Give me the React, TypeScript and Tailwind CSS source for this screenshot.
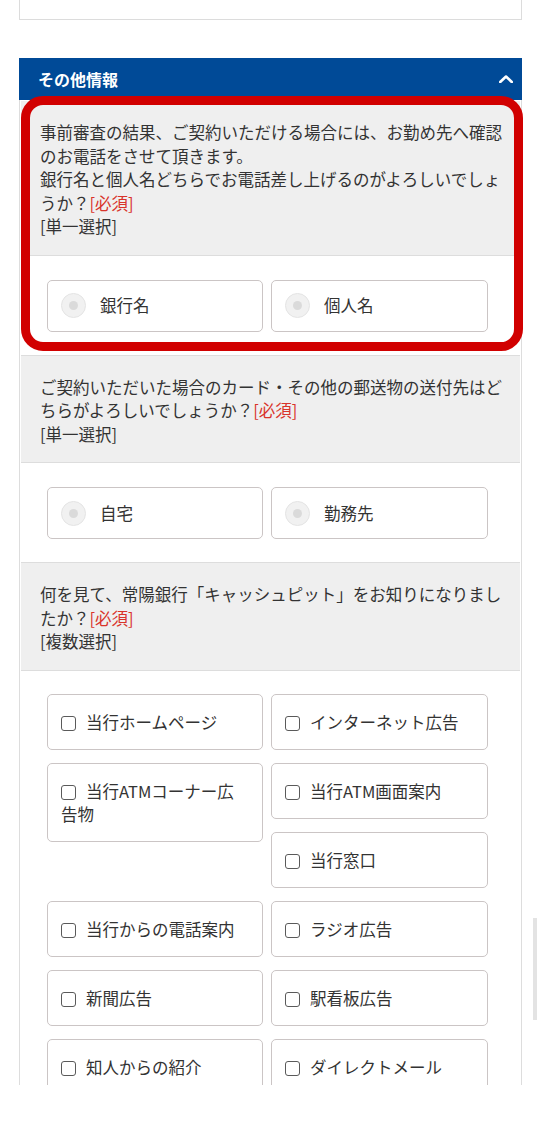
import React from 'react';

type Opt = { label: React.ReactNode; tall?: boolean };

const FONT = "font-['Noto_Sans_CJK_JP','Noto_Sans',sans-serif]";

function Required() {
  return <span className="text-[#d9342b]">[必須]</span>;
}

function Question({ children, first }: { children: React.ReactNode; first?: boolean }) {
  return (
    <div className={`${first ? '' : 'border-t border-[#dddddd]'} bg-white`}>
      <div className="bg-[#efefef] border-b border-[#dddddd] pl-[19px] pr-[8px] pt-5 pb-4 text-[16.5px] leading-[23.5px] text-[#333333]">
        {children}
      </div>
    </div>
  );
}

function RadioRow({ options }: { options: string[] }) {
  return (
    <div className="pl-[26px] pt-6 pb-[23px] grid grid-cols-[216px_217px] gap-x-2">
      {options.map((o) => (
        <div key={o} className="h-[52px] border border-[#cbc5c5] rounded-[5px] flex items-center pl-[13px]">
          <div className="w-[25px] h-[25px] rounded-full bg-[#f1f1f1] border border-[#e4e4e4] flex items-center justify-center">
            <div className="w-[9px] h-[9px] rounded-full bg-[#dadada]" />
          </div>
          <span className="ml-[14px] text-[16.5px] text-[#333333]">{o}</span>
        </div>
      ))}
    </div>
  );
}

function CheckItem({ opt }: { opt: Opt }) {
  return (
    <div
      className={`self-start border border-[#cbc5c5] rounded-[5px] pl-[13px] pr-[12px] pt-[16px] pb-[15px] text-[16.5px] leading-[23px] text-[#333333] ${
        opt.tall ? 'row-span-2' : ''
      }`}
    >
      <span className="inline-block w-[15px] h-[15px] border-[1.5px] border-[#5a5a5a] rounded-[3px] align-middle mr-[10px] relative -top-px" />
      {opt.label}
    </div>
  );
}

const checks: Opt[] = [
  { label: '当行ホームページ' },
  { label: 'インターネット広告' },
  {
    label: (
      <>
        当行ATMコーナー広
        <br />
        告物
      </>
    ),
    tall: true,
  },
  { label: '当行ATM画面案内' },
  { label: '当行窓口' },
  { label: '当行からの電話案内' },
  { label: 'ラジオ広告' },
  { label: '新聞広告' },
  { label: '駅看板広告' },
  { label: '知人からの紹介' },
  { label: 'ダイレクトメール' },
];

export default function App() {
  return (
    <div className={`relative min-h-[1125px] bg-white ${FONT}`}>
      <div className="h-[1085px] overflow-hidden">
        <div className="ml-[19px] w-[503px]">
          <div className="h-[20px] border-x border-b border-[#dcdcdc] bg-white" />

          <div className="relative mt-[38px]">
            <div className="h-[42px] bg-[#004a97] flex items-center justify-between pl-[19px] pr-[9px]">
              <span className="text-white font-bold text-[16px]">その他情報</span>
              <svg width="14" height="8" viewBox="0 0 14 8" fill="none">
                <path d="M1.2 7 L7 1.5 L12.8 7" stroke="white" strokeWidth="2.6" strokeLinecap="round" strokeLinejoin="round" />
              </svg>
            </div>

            <div className="border-x border-[#dddddd] px-px pt-px">
              <Question first>
                事前審査の結果、ご契約いただける場合には、お勤め先へ確認
                <br />
                のお電話をさせて頂きます。
                <br />
                銀行名と個人名どちらでお電話差し上げるのがよろしいでしょ
                <br />
                うか？<Required />
                <br />
                [単一選択]
              </Question>
              <RadioRow options={['銀行名', '個人名']} />

              <Question>
                ご契約いただいた場合のカード・その他の郵送物の送付先はど
                <br />
                ちらがよろしいでしょうか？<Required />
                <br />
                [単一選択]
              </Question>
              <RadioRow options={['自宅', '勤務先']} />

              <Question>
                何を見て、常陽銀行「キャッシュピット」をお知りになりまし
                <br />
                たか？<Required />
                <br />
                [複数選択]
              </Question>
              <div className="pl-[26px] pt-[23px] pb-6 grid grid-cols-[216px_217px] gap-x-2 gap-y-[13px] items-start">
                {checks.map((c, i) => (
                  <CheckItem key={i} opt={c} />
                ))}
              </div>
            </div>

            {/* highlight annotation */}
            <div className="absolute left-[2px] top-[38px] w-[502px] h-[255px] border-[9px] border-[#d10000] rounded-[22px] pointer-events-none" />
          </div>
        </div>
      </div>

      <div className="absolute left-[533px] top-[918px] w-[4px] h-[102px] bg-[#e3e3e3]" />
    </div>
  );
}
